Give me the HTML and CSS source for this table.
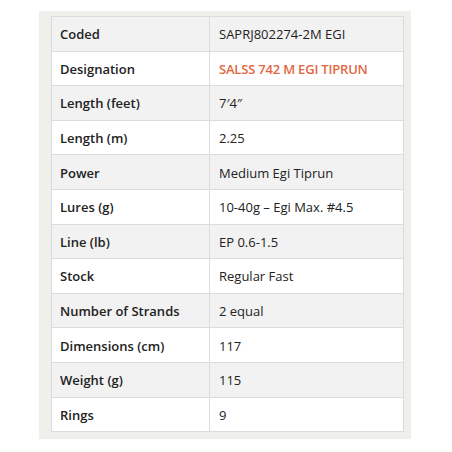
FILE: index.html
```html
<!DOCTYPE html>
<html>
<head>
<meta charset="utf-8">
<link rel="stylesheet" href="styles.css">
</head>
<body>
<div class="frame">
<table class="specs">
<tr><th>Coded</th><td>SAPRJ802274-2M EGI</td></tr>
<tr><th>Designation</th><td class="accent">SALSS 742 M EGI TIPRUN</td></tr>
<tr><th>Length (feet)</th><td>7′4″</td></tr>
<tr><th>Length (m)</th><td>2.25</td></tr>
<tr><th>Power</th><td>Medium Egi Tiprun</td></tr>
<tr><th>Lures (g)</th><td>10-40g – Egi Max. #4.5</td></tr>
<tr><th>Line (lb)</th><td>EP 0.6-1.5</td></tr>
<tr><th>Stock</th><td>Regular Fast</td></tr>
<tr><th>Number of Strands</th><td>2 equal</td></tr>
<tr><th>Dimensions (cm)</th><td>117</td></tr>
<tr><th>Weight (g)</th><td>115</td></tr>
<tr><th>Rings</th><td>9</td></tr>
</table>
</div>
</body>
</html>
```
FILE: styles.css
```css
html, body { margin: 0; padding: 0; background: #fff; }
body { padding: 11px 41px 0 39px; }
.frame {
  width: 372px;
  height: 428px;
  box-sizing: border-box;
  background: #efefeb;
  padding: 5px 7px 8px 12px;
}
.specs {
  width: 353px;
  border-collapse: collapse;
  font-family: "Open Sans", sans-serif;
  font-size: 13px;
  color: #222;
  table-layout: fixed;
}
.specs tr { height: 34.6px; }
.specs tr:nth-child(odd) { background: #f2f2f2; }
.specs tr:nth-child(even) { background: #fff; }
.specs th, .specs td {
  border: 1px solid #dcdcdc;
  padding: 1px 9px 0;
  text-align: left;
  vertical-align: middle;
}
.specs th { width: 140px; font-weight: 600; padding-left: 8px; }
.specs td { font-weight: 400; }
.specs td.accent { color: #e2673f; font-weight: 600; letter-spacing: -0.2px; }
```
